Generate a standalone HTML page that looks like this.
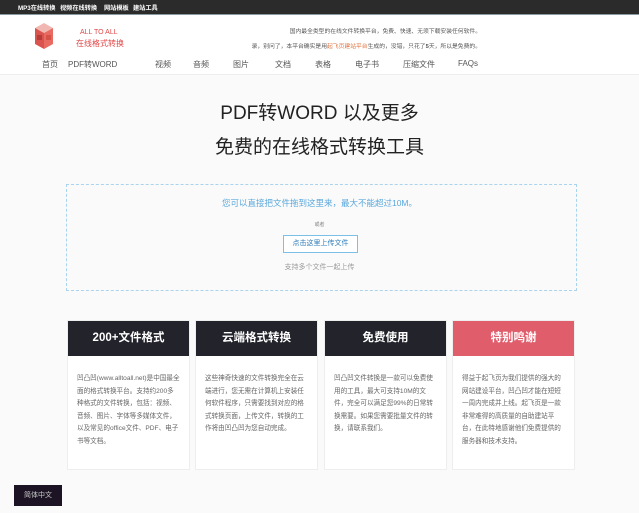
<!DOCTYPE html>
<html><head><meta charset="utf-8"><style>
*{margin:0;padding:0;box-sizing:border-box}
body{width:639px;height:513px;overflow:hidden;background:#fafafa;font-family:"Liberation Sans","Noto Sans CJK SC",sans-serif;position:relative;color:#333}
.abs{position:absolute;white-space:nowrap}
.top{position:absolute;left:0;top:0;width:639px;height:15px;background:#2b2b2b;border-bottom:1px solid #8a9aa0}
.top span{position:absolute;top:3px;font-size:6.2px;color:#fff;font-weight:bold}
.hdr{position:absolute;left:0;top:15px;width:639px;height:60px;background:#fff;border-bottom:1px solid #eee}
.nav{position:absolute;top:59px;font-size:8px;color:#555}
.card{position:absolute;top:320px;width:123px;height:150px;background:#fff;border:1px solid #eee}
.card .h{height:35px;background:#22232b;color:#fff;font-weight:bold;font-size:11.5px;text-align:center;line-height:35px}
.card .b{padding:17px 9px 0 9px;font-size:6.6px;line-height:12.5px;color:#666}
</style></head><body>
<div class="top">
<span style="left:18px">MP3在线转换</span><span style="left:60px">视频在线转换</span><span style="left:104px">网站模板</span><span style="left:133px">建站工具</span>
</div>
<div class="hdr"></div>
<svg class="abs" style="left:34px;top:22px" width="20" height="28" viewBox="0 0 20 28">
<polygon points="10,1 19,6 10,11 1,6" fill="#f0b8b0"/>
<polygon points="1,6 10,11 10,27 1,22" fill="#d9534f"/>
<polygon points="19,6 10,11 10,27 19,22" fill="#e86a60"/>
<rect x="3" y="13" width="5" height="5" fill="#9e2b2b" opacity=".6"/>
<rect x="12" y="13" width="5" height="5" fill="#c0392b" opacity=".5"/>
</svg>
<div class="abs" style="left:80px;top:29px;font-size:7px;color:#e04848">ALL TO ALL</div>
<div class="abs" style="left:76px;top:38px;font-size:8px;color:#e04848">在线格式转换</div>
<div class="abs" style="right:158px;top:26px;font-size:5.8px;color:#555">国内最全类型的在线文件转换平台，免费、快速、无须下载安装任何软件。</div>
<div class="abs" style="right:158px;top:41px;font-size:5.8px;color:#555">录，别问了，本平台确实是用<span style="color:#e0703a">起飞页建站平台</span>生成的，没错，只花了<b>5</b>天，所以是免费的。</div>
<div class="nav" style="left:42px">首页</div><div class="nav" style="left:68px">PDF转WORD</div><div class="nav" style="left:155px">视频</div><div class="nav" style="left:193px">音频</div><div class="nav" style="left:233px">图片</div><div class="nav" style="left:275px">文档</div><div class="nav" style="left:315px">表格</div><div class="nav" style="left:355px">电子书</div><div class="nav" style="left:403px">压缩文件</div><div class="nav" style="left:458px">FAQs</div>
<div class="abs" style="left:0;width:639px;text-align:center;top:98px;font-size:19px;color:#222">PDF转WORD 以及更多</div>
<div class="abs" style="left:0;width:639px;text-align:center;top:132px;font-size:19px;color:#222">免费的在线格式转换工具</div>
<div class="abs" style="left:66px;top:184px;width:511px;height:107px;border:1px dashed #aad4ee;background:#fafafa"></div>
<div class="abs" style="left:0;width:639px;text-align:center;top:197px;font-size:8.5px;color:#5aa8dc">您可以直接把文件拖到这里来，最大不能超过10M。</div>
<div class="abs" style="left:0;width:639px;text-align:center;top:221px;font-size:5px;color:#888">或者</div>
<div class="abs" style="left:283px;top:235px;width:75px;height:18px;border:1px solid #7cc0e8;background:#fff;font-size:7px;color:#2a7ab8;text-align:center;line-height:16px">点击这里上传文件</div>
<div class="abs" style="left:0;width:639px;text-align:center;top:262px;font-size:7px;color:#999">支持多个文件一起上传</div>
<div class="card" style="left:67px"><div class="h">200+文件格式</div><div class="b">凹凸凹(www.alltoall.net)是中国最全面的格式转换平台。支持约200多种格式的文件转换，包括：视频、音频、图片、字体等多媒体文件，以及常见的office文件、PDF、电子书等文档。</div></div>
<div class="card" style="left:195px"><div class="h">云端格式转换</div><div class="b">这些神奇快速的文件转换完全在云端进行，您无需在计算机上安装任何软件程序，只需要找到对应的格式转换页面，上传文件，转换的工作将由凹凸凹为您自动完成。</div></div>
<div class="card" style="left:324px"><div class="h">免费使用</div><div class="b">凹凸凹文件转换是一款可以免费使用的工具，最大可支持10M的文件，完全可以满足您99%的日常转换需要。如果您需要批量文件的转换，请联系我们。</div></div>
<div class="card" style="left:452px"><div class="h" style="background:#e05d6c">特别鸣谢</div><div class="b">得益于起飞页为我们提供的强大的网站建设平台，凹凸凹才能在短短一周内完成并上线。起飞页是一款非常难得的高质量的自助建站平台，在此特地感谢他们免费提供的服务器和技术支持。</div></div>
<div class="abs" style="left:14px;top:485px;width:48px;height:21px;background:#1c1424;color:#ccc;font-size:7px;text-align:center;line-height:21px">简体中文</div>
</body></html>
